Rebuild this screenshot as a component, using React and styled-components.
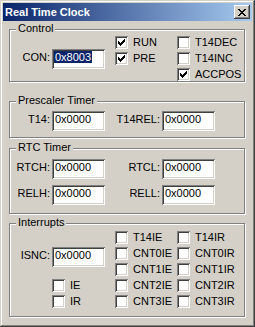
import styled, { createGlobalStyle } from "styled-components";

const GlobalStyle = createGlobalStyle`
  html, body {
    margin: 0;
    padding: 0;
    background: #d4d0c8;
  }
  body {
    font-family: "Liberation Sans", Arial, sans-serif;
    font-size: 11px;
    color: #000;
  }
`;

const Window = styled.div`
  width: 255px;
  height: 327px;
  box-sizing: border-box;
  padding: 3px;
  display: flex;
  flex-direction: column;
  background: #d4d0c8;
  box-shadow: inset -1px -1px #404040, inset 1px 1px #d4d0c8,
    inset -2px -2px #808080, inset 2px 2px #fff;
`;

const TitleBar = styled.div`
  height: 18px;
  flex: none;
  display: flex;
  align-items: center;
  justify-content: space-between;
  padding: 0 2px;
  background: linear-gradient(to right, #0a246a, #a6caf0);
`;

const Title = styled.span`
  color: #fff;
  font-weight: bold;
  line-height: 13px;
`;

const CloseButton = styled.div`
  width: 16px;
  height: 14px;
  display: flex;
  align-items: center;
  justify-content: center;
  background: #d4d0c8;
  box-shadow: inset -1px -1px #404040, inset 1px 1px #fff,
    inset -2px -2px #808080, inset 2px 2px #d4d0c8;
`;

const Body = styled.div`
  display: flex;
  flex-direction: column;
  padding: 8px 7px 0 6px;
`;

const Group = styled.div`
  position: relative;
  box-sizing: border-box;
  height: ${(p) => p.$h}px;
  margin-top: ${(p) => p.$mt || 0}px;
  padding-top: ${(p) => p.$pt}px;
  border: 1px solid #808080;
  box-shadow: 1px 1px 0 #fff, inset 1px 1px 0 #fff;
`;

const Caption = styled.span`
  position: absolute;
  top: -8px;
  left: 6px;
  padding: 0 2px;
  line-height: 13px;
  background: #d4d0c8;
`;

const Grid = styled.div`
  display: grid;
  grid-template-columns: ${(p) => p.$cols};
  grid-auto-rows: ${(p) => p.$row}px;
  row-gap: ${(p) => p.$gap}px;
`;

const Label = styled.span`
  grid-row: ${(p) => p.$row};
  grid-column: ${(p) => p.$col};
  align-self: ${(p) => p.$align || "start"};
  height: 20px;
  box-sizing: border-box;
  padding: 2px 2px 0 0;
  line-height: 13px;
  text-align: right;
  white-space: nowrap;
`;

const Edit = styled.div`
  grid-row: ${(p) => p.$row};
  grid-column: ${(p) => p.$col};
  align-self: ${(p) => p.$align || "start"};
  width: 53px;
  height: 20px;
  box-sizing: border-box;
  padding: 2px 3px 0 2px;
  line-height: 13px;
  white-space: nowrap;
  background: #fff;
  box-shadow: inset 1px 1px #808080, inset -1px -1px #fff,
    inset 2px 2px #404040, inset -2px -2px #d4d0c8;
`;

const EditText = styled.span`
  padding: 0 1px;
  background: ${(p) => (p.$selected ? "#0a246a" : "transparent")};
  color: ${(p) => (p.$selected ? "#fff" : "#000")};
`;

const CheckItem = styled.div`
  grid-row: ${(p) => p.$row};
  grid-column: ${(p) => p.$col};
  display: flex;
  align-items: flex-start;
  gap: 5px;
  line-height: 13px;
  white-space: nowrap;
`;

const Box = styled.span`
  width: 13px;
  height: 13px;
  flex: none;
  display: flex;
  align-items: center;
  justify-content: center;
  background: #fff;
  box-shadow: inset 1px 1px #808080, inset -1px -1px #fff,
    inset 2px 2px #404040, inset -2px -2px #d4d0c8;
`;

function CheckMark() {
  return (
    <svg width="7" height="7" viewBox="0 0 7 7" shapeRendering="crispEdges">
      <path
        fill="#000"
        d="M6 0h1v3h-1zM5 1h1v3h-1zM4 2h1v3h-1zM3 3h1v3h-1zM2 4h1v3h-1zM1 3h1v3h-1zM0 2h1v3h-1z"
      />
    </svg>
  );
}

function CloseGlyph() {
  return (
    <svg width="8" height="7" viewBox="0 0 8 7" shapeRendering="crispEdges">
      <path
        fill="#000"
        d="M0 0h2v1h-2zM6 0h2v1h-2zM1 1h2v1h-2zM5 1h2v1h-2zM2 2h4v1h-4zM3 3h2v1h-2zM2 4h4v1h-4zM1 5h2v1h-2zM5 5h2v1h-2zM0 6h2v1h-2zM6 6h2v1h-2z"
      />
    </svg>
  );
}

function Check({ row, col, checked, children }) {
  return (
    <CheckItem $row={row} $col={col}>
      <Box>{checked && <CheckMark />}</Box>
      <span>{children}</span>
    </CheckItem>
  );
}

function Field({ row, col, label, value, selected, align }) {
  return (
    <>
      <Label $row={row} $col={col} $align={align}>
        {label}
      </Label>
      <Edit $row={row} $col={col + 1} $align={align}>
        <EditText $selected={selected}>{value}</EditText>
      </Edit>
    </>
  );
}

const checkCols = "42px 53px 10px 62px 1fr";
const fieldCols = "42px 53px 57px 53px";

export default function App() {
  return (
    <>
      <GlobalStyle />
      <Window>
        <TitleBar>
          <Title>Real Time Clock</Title>
          <CloseButton>
            <CloseGlyph />
          </CloseButton>
        </TitleBar>
        <Body>
          <Group $h={53} $pt={6}>
            <Caption>Control</Caption>
            <Grid $cols={checkCols} $row={13} $gap={3}>
              <Field row="1 / span 3" col={1} label="CON:" value="0x8003" selected align="center" />
              <Check row={1} col={4} checked>RUN</Check>
              <Check row={2} col={4} checked>PRE</Check>
              <Check row={1} col={5}>T14DEC</Check>
              <Check row={2} col={5}>T14INC</Check>
              <Check row={3} col={5} checked>ACCPOS</Check>
            </Grid>
          </Group>

          <Group $h={37} $mt={19} $pt={9}>
            <Caption>Prescaler Timer</Caption>
            <Grid $cols={fieldCols} $row={20} $gap={6}>
              <Field row={1} col={1} label="T14:" value="0x0000" />
              <Field row={1} col={3} label="T14REL:" value="0x0000" />
            </Grid>
          </Group>

          <Group $h={66} $mt={10} $pt={10}>
            <Caption>RTC Timer</Caption>
            <Grid $cols={fieldCols} $row={20} $gap={6}>
              <Field row={1} col={1} label="RTCH:" value="0x0000" />
              <Field row={1} col={3} label="RTCL:" value="0x0000" />
              <Field row={2} col={1} label="RELH:" value="0x0000" />
              <Field row={2} col={3} label="RELL:" value="0x0000" />
            </Grid>
          </Group>

          <Group $h={94} $mt={9} $pt={7}>
            <Caption>Interrupts</Caption>
            <Grid $cols={checkCols} $row={13} $gap={3}>
              <Field row="2 / span 2" col={1} label="ISNC:" value="0x0000" />
              <Check row={4} col={2}>IE</Check>
              <Check row={5} col={2}>IR</Check>
              <Check row={1} col={4}>T14IE</Check>
              <Check row={2} col={4}>CNT0IE</Check>
              <Check row={3} col={4}>CNT1IE</Check>
              <Check row={4} col={4}>CNT2IE</Check>
              <Check row={5} col={4}>CNT3IE</Check>
              <Check row={1} col={5}>T14IR</Check>
              <Check row={2} col={5}>CNT0IR</Check>
              <Check row={3} col={5}>CNT1IR</Check>
              <Check row={4} col={5}>CNT2IR</Check>
              <Check row={5} col={5}>CNT3IR</Check>
            </Grid>
          </Group>
        </Body>
      </Window>
    </>
  );
}
